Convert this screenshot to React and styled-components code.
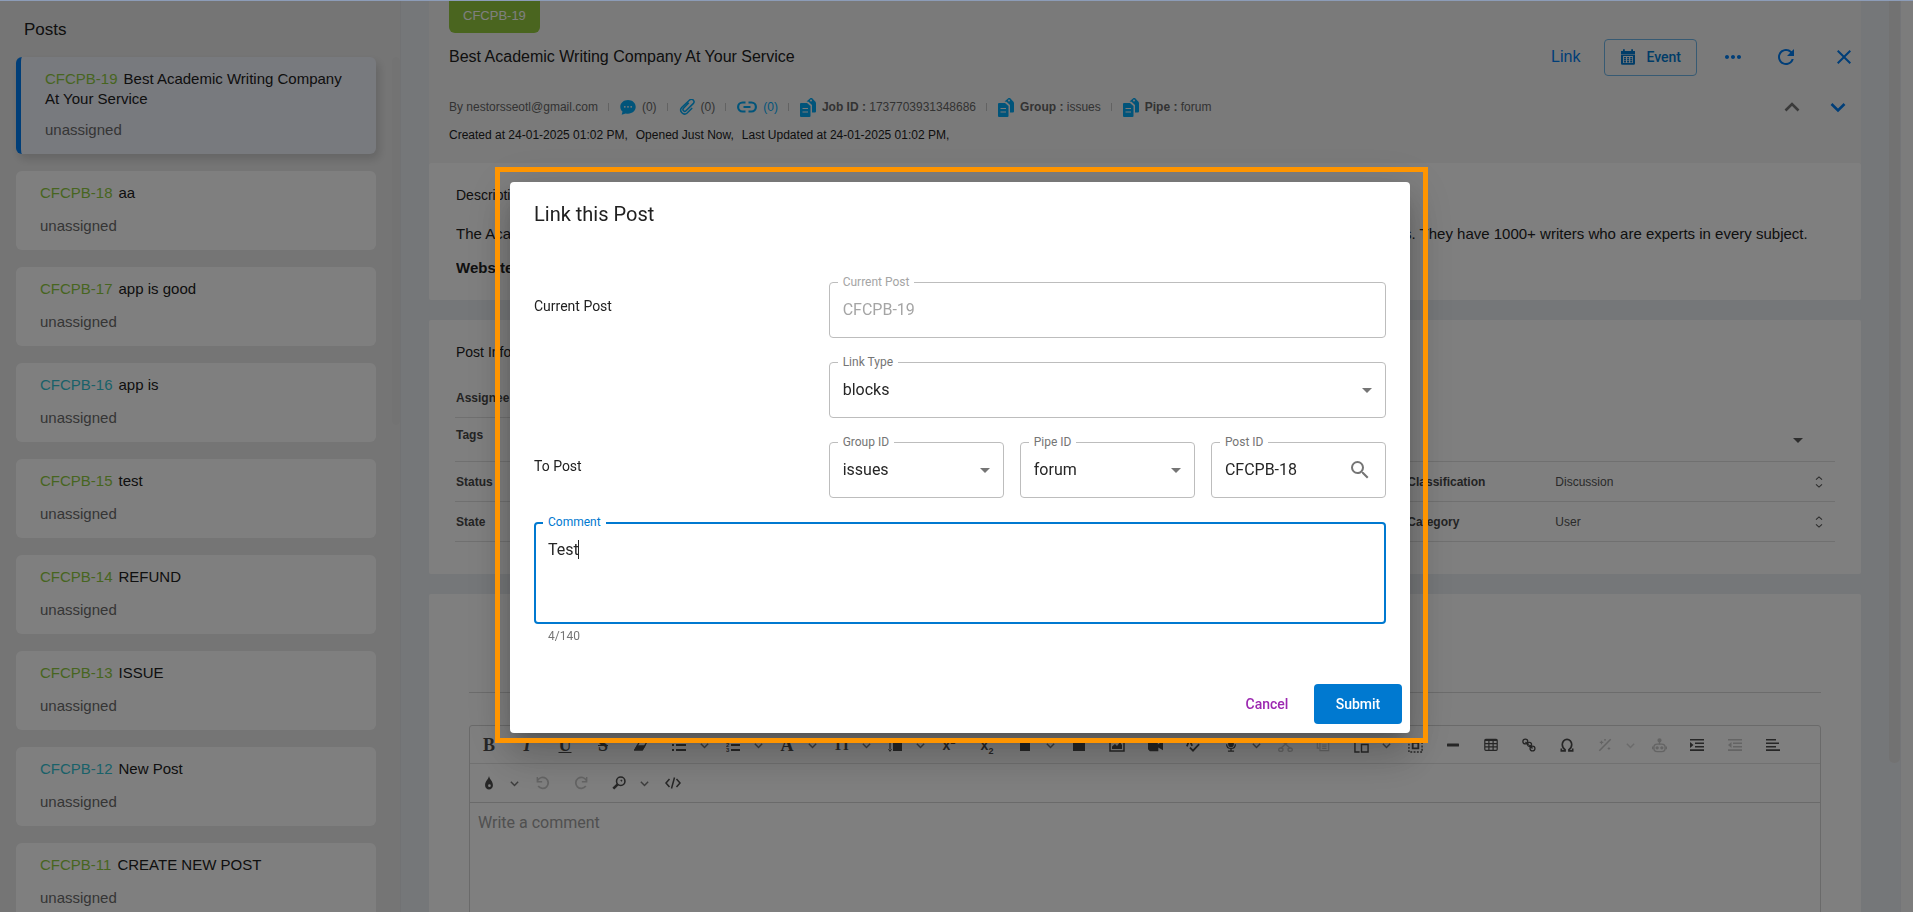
import React, { useState } from 'react'
import styled, { createGlobalStyle, css } from 'styled-components'
import {
  MdArrowDropDown,
  MdSearch,
  MdMoreHoriz,
  MdRefresh,
  MdClose,
} from 'react-icons/md'

const sans = `'Liberation Sans', Arial, sans-serif`
const ui = `Roboto, 'Liberation Sans', sans-serif`
const blue = '#007cf0'
const primary = '#0079d0'

const GlobalStyle = createGlobalStyle`
  * {
    box-sizing: border-box;
  }

  body {
    margin: 0;
    overflow: hidden;
    font-family: ${sans};
    color: #212121;
  }

  button, input, select, textarea {
    margin: 0;
    padding: 0;
    border: 0;
    outline: 0;
    background: none;
    font: inherit;
    color: inherit;
  }

  p, h1, h2, h3, ul {
    margin: 0;
    padding: 0;
    font-weight: 400;
  }
`

const Page = styled.div`
  display: flex;
  height: 100vh;
  overflow: hidden;
  background-color: #ebeef2;
`

/* ---------- sidebar ---------- */

const Sidebar = styled.aside`
  display: flex;
  flex-direction: column;
  flex: 0 0 401px;
  border-right: 1px solid #e2e5e9;
  background-color: #ebebeb;
`
const SidebarTitle = styled.h2`
  padding: 20px 24px 17px;
  font-size: 17px;
  line-height: 20px;
`
const SidebarBody = styled.div`
  display: flex;
  gap: 16px;
`
const PostList = styled.ul`
  display: flex;
  flex: 1;
  flex-direction: column;
  gap: 17px;
  padding-left: 16px;
  list-style: none;
`
const SidebarThumb = styled.div`
  width: 8px;
  height: 368px;
  border-radius: 4px;
  background-color: #e7e7e7;
`
const PostCard = styled.li`
  padding: 12px 24px 14px;
  border-radius: 6px;
  background-color: #fff;
  font-size: 15px;
  line-height: 20px;

  ${(props) =>
    props.$active &&
    css`
      border-left: 5px solid ${blue};
      background-color: #f1f4fd;
      box-shadow: 3px 5px 10px rgba(0, 0, 0, 0.15);
    `}
`
const PostTitle = styled.h3`
  min-height: 22px;
  margin-bottom: 11px;
  font-size: 15px;
`
const PostCode = styled.span`
  margin-right: 6px;
  color: ${(props) => props.$color};
`
const PostOwner = styled.p`
  color: #6b6b6b;
`

/* ---------- main column ---------- */

const Main = styled.main`
  display: flex;
  flex: 1;
  gap: 28px;
  min-width: 0;
  padding-left: 28px;
`
const Content = styled.div`
  flex: 1;
  min-width: 0;
`
const MainThumb = styled.div`
  width: 11px;
  height: 763px;
  border-radius: 0 0 5px 5px;
  background-color: #e5e5e5;
`
const RightRail = styled.div`
  width: 13px;
  border-left: 1px solid #e9eaf0;
  background-color: #f8f8f8;
`

const Header = styled.header`
  display: flex;
  flex-direction: column;
  align-items: stretch;
  height: 163px;
  padding: 0 5px 0 20px;
  background-color: #f5f5f5;
`
const Badge = styled.span`
  align-self: flex-start;
  padding: 6px 14px 7px;
  border-radius: 0 0 6px 6px;
  background-color: #94ca3e;
  color: #fff;
  font-size: 13px;
  line-height: 20px;
`
const HeaderRow = styled.div`
  display: flex;
  align-items: center;
  justify-content: space-between;
  height: 38px;
  margin-top: 5px;
`
const HeaderTitle = styled.h1`
  font-size: 16px;
  line-height: 20px;
`
const Actions = styled.div`
  display: flex;
  align-items: center;
  color: ${blue};
`
const LinkAction = styled.a`
  margin-right: 24px;
  color: inherit;
  font-size: 16px;
  text-decoration: none;
`
const EventButton = styled.button`
  display: flex;
  align-items: center;
  gap: 10px;
  height: 37px;
  padding: 0 15px;
  border: 1px solid #6eb4e6;
  border-radius: 4px;
  color: ${primary};
  font-family: ${ui};
  font-size: 14px;
  font-weight: 500;
`
const IconButton = styled.button`
  display: flex;
  align-items: center;
  justify-content: center;
  width: 24px;
  height: 24px;
  margin-left: ${(props) => props.$gap || 0}px;
  color: ${(props) => props.$color || 'inherit'};
`
const MetaRow = styled.div`
  display: flex;
  align-items: center;
  height: 24px;
  margin-top: 19px;
  color: #666;
  font-size: 12px;
`
const MetaItem = styled.span`
  display: flex;
  align-items: center;
  gap: 6px;
  color: ${(props) => (props.$link ? '#03a9f4' : 'inherit')};

  &:not(:first-child)::before {
    content: '';
    width: 1px;
    height: 8px;
    margin: 0 5px 0 10px;
    background-color: #c4c4c4;
  }

  svg {
    color: #03a9f4;
  }
`
const Stepper = styled.div`
  display: flex;
  gap: 22px;
  margin: 0 6px 0 auto;
`
const Dates = styled.p`
  display: flex;
  gap: 8px;
  margin-top: 8px;
  font-size: 12px;
  line-height: 16px;
`

const Card = styled.section`
  margin-bottom: 20px;
  padding: ${(props) => props.$padding};
  border-radius: 2px;
  background-color: #fff;
`
const CardTitle = styled.h2`
  font-size: 14px;
  line-height: 20px;
`
const Description = styled.p`
  margin-top: ${(props) => props.$gap}px;
  overflow: hidden;
  font-size: 15px;
  line-height: 20px;
  white-space: nowrap;
`
const InfoRow = styled.div`
  display: grid;
  grid-template-columns: repeat(3, 1fr);
  column-gap: 48px;
  align-items: center;
  height: 40px;
  margin-left: -1px;
  padding-left: 1px;
  border-bottom: 1px solid #e0e0e0;
  color: #555;
  font-size: 12px;
`
const AssigneeRow = styled(InfoRow)`
  align-items: end;
  width: 50%;
  height: 56px;
  padding-bottom: 12px;
`
const TagsRow = styled(InfoRow)`
  align-items: start;
  height: 44px;
  padding-top: 10px;
`
const InfoCell = styled.div`
  display: grid;
  grid-template-columns: 148px 1fr 22px;
  align-items: center;
  grid-column: 3;
`
const InfoLabel = styled.label`
  color: #484848;
  font-weight: 700;
`
const InfoSelect = styled.select`
  appearance: none;
`
const TagArrow = styled(MdArrowDropDown)`
  grid-column: 3;
  justify-self: end;
  margin-right: 25px;
  color: #5a5a5a;
`

/* ---------- comment editor ---------- */

const TabLine = styled.div`
  height: 99px;
  margin-bottom: 32px;
  border-bottom: 1px solid #d8d8d8;
`
const Editor = styled.div`
  height: 400px;
  border: 1px solid #d4d4d4;
  border-radius: 3px;
`
const Toolbar = styled.div`
  display: flex;
  gap: 4px;
  height: ${(props) => props.$height}px;
  padding: 2px;
  border-bottom: 1px solid ${(props) => props.$line};
`
const Tool = styled.span`
  display: flex;
  opacity: ${(props) => (props.$off ? 0.3 : 1)};
`
const ToolButton = styled.button`
  display: flex;
  align-items: center;
  justify-content: center;
  width: 34px;
  height: 34px;
  color: #4c4c4c;
`
const ToolChevron = styled(ToolButton)`
  width: 16px;
  color: #7a7a7a;
`
const Glyph = styled.span`
  font-family: 'Liberation Serif', serif;
  font-size: ${(props) => props.$size || 18}px;
  font-weight: 700;
  font-style: ${(props) => (props.$italic ? 'italic' : 'normal')};
  line-height: 20px;
  text-decoration: ${(props) => props.$line || 'none'};
`
const Script = styled.span`
  font-size: 14px;
  font-weight: 700;
  line-height: 20px;

  sup,
  sub {
    font-size: 9px;
    line-height: 0;
  }
`
const EditorInput = styled.textarea`
  display: block;
  width: 100%;
  height: 300px;
  padding: 8px;
  font-family: ${ui};
  font-size: 16px;
  line-height: 24px;
  resize: none;

  &::placeholder {
    color: #a0a0a0;
    opacity: 1;
  }
`

/* ---------- dialog ---------- */

const TopLine = styled.div`
  position: fixed;
  inset: 0 0 auto;
  height: 1px;
  background-color: #8c9cb8;
`
const Overlay = styled.div`
  position: fixed;
  inset: 0;
  display: flex;
  align-items: center;
  justify-content: center;
  padding: 0 0 2px 10px;
  background-color: rgba(0, 0, 0, 0.5);
`
const Frame = styled.div`
  position: relative;
  padding: 15px 18px 10px 15px;

  &::after {
    content: '';
    position: absolute;
    inset: 0;
    border: 5px solid #ff9500;
    pointer-events: none;
  }
`
const Dialog = styled.form`
  width: 900px;
  max-width: 90vw;
  border-radius: 4px;
  background-color: #fff;
  box-shadow:
    0 11px 15px -7px rgba(0, 0, 0, 0.2),
    0 24px 38px 3px rgba(0, 0, 0, 0.14),
    0 9px 46px 8px rgba(0, 0, 0, 0.12);
  font-family: ${ui};
`
const DialogTitle = styled.h2`
  padding: 16px 24px;
  font-size: 20px;
  line-height: 32px;
`
const DialogBody = styled.div`
  display: grid;
  grid-template-columns: 1fr 2fr;
  gap: 24px 16px;
  padding: 36px 24px 40px;
`
const RowLabel = styled.p`
  grid-column: 1;
  padding-top: 14px;
  font-size: 14px;
  line-height: 20px;
`
const FieldGroup = styled.div`
  display: grid;
  grid-column: 2;
  grid-template-columns: repeat(${(props) => props.$count || 1}, minmax(0, 1fr));
  gap: 16px;
`
const Field = styled.div`
  position: relative;
  display: flex;
  align-items: center;
  height: 56px;
  padding: 0 6px 0 13px;
  border: 1px solid #bdbdbd;
  border-radius: 4px;
  color: #757575;
`
const FieldLabel = styled.label`
  position: absolute;
  top: -9px;
  left: 8px;
  padding: 0 5px;
  background-color: #fff;
  color: ${(props) => props.$color || '#757575'};
  font-size: 12px;
  line-height: 16px;
`
const fieldText = css`
  flex: 1;
  min-width: 0;
  height: 54px;
  padding-bottom: 2px;
  color: #262626;
  font-size: 16px;
`
const FieldInput = styled.input`
  ${fieldText}

  &:disabled {
    color: #a5a5a5;
  }
`
const FieldSelect = styled.select`
  ${fieldText}
  appearance: none;
`
const SearchButton = styled.button`
  display: flex;
  margin-right: 7px;
  color: #757575;
`
const CommentRow = styled.div`
  grid-column: 1 / -1;
`
const CommentField = styled(Field)`
  height: 102px;
  padding: 14px 12px;
  border: 2px solid ${primary};

  ${FieldLabel} {
    top: -10px;
    left: 7px;
  }
`
const CommentInput = styled.textarea`
  width: 100%;
  height: 71px;
  color: #262626;
  font-size: 16px;
  line-height: 23px;
  caret-color: transparent;
  resize: none;
`
const Caret = styled.span`
  position: absolute;
  top: 16px;
  left: 42px;
  width: 1px;
  height: 19px;
  background-color: #262626;
`
const Counter = styled.p`
  margin: 4px 14px 0;
  color: #757575;
  font-size: 12px;
  line-height: 16px;
`
const DialogActions = styled.div`
  display: flex;
  justify-content: flex-end;
  gap: 8px;
  padding: 0 8px 9px;
`
const DialogButton = styled.button`
  min-width: ${(props) => (props.$primary ? 88 : 78)}px;
  height: 40px;
  padding: 0 16px;
  border-radius: 4px;
  background-color: ${(props) => (props.$primary ? primary : 'transparent')};
  color: ${(props) => (props.$primary ? '#fff' : '#9c27b0')};
  font-size: 14px;
  font-weight: 500;
`

/* ---------- icons ---------- */

const Svg = ({ size = 16, box = 16, children, ...rest }) => (
  <svg
    width={size}
    height={size}
    viewBox={`0 0 ${box} ${box}`}
    fill="none"
    stroke="currentColor"
    strokeWidth="1.5"
    aria-hidden="true"
    {...rest}
  >
    {children}
  </svg>
)

const Solid = (props) => <Svg fill="currentColor" stroke="none" {...props} />

const ChevronIcon = ({ up, size = 16, width = 2.6 }) => (
  <Svg size={size} strokeWidth={width}>
    <path d={up ? 'M1.500 11.500 8 5l6.500 6.500' : 'M1.500 5 8 11.500 14.500 5'} />
  </Svg>
)

const SortIcon = () => (
  <Svg size={12} box={12} strokeWidth="1.1">
    <path d="M3 3.7 6 .9l3 2.8M3 8.3l3 2.8 3-2.8" />
  </Svg>
)

const ChatIcon = () => (
  <Solid size={16}>
    <path d="M8 1C3.7 1 .3 3.9 .3 7.7c0 2 .9 3.7 2.2 4.900L1.700 15.800l4-1.400c.8.2 1.500.3 2.300.3 4.300 0 7.700-3 7.700-6.900S12.300 1 8 1z" />
    <g fill="#f5f5f5">
      <circle cx="4.8" cy="7.8" r="0.9" />
      <circle cx="8" cy="7.8" r="0.9" />
      <circle cx="11.2" cy="7.8" r="0.9" />
    </g>
  </Solid>
)

const ClipIcon = () => (
  <Svg size={16} strokeWidth="1.5">
    <path d="M9.800 3.800 4.500 9.300a1.700 1.700 0 0 0 2.500 2.400l7.200-7.100a2.500 2.500 0 0 0-3.600-3.600L2.700 8.500a3.900 3.900 0 0 0 5.500 5.500l5-5" />
  </Svg>
)

const ChainIcon = () => (
  <svg width="20" height="12" viewBox="0 0 20 12" fill="none" stroke="currentColor" strokeWidth="2.2">
    <path d="M8.500 1.500H5.600a4.500 4.500 0 0 0 0 9H8.500M11.500 1.500h2.900a4.500 4.500 0 0 1 0 9h-2.900M6.500 6h7" />
  </svg>
)

const CopyIcon = () => (
  <svg width="16" height="19" viewBox="0 0 16 19" fill="currentColor">
    <path d="M1 5h6l3.500 3v10a1 1 0 0 1-1 1H1a1 1 0 0 1-1-1V6a1 1 0 0 1 1-1z" />
    <path d="M6.500 3.500 10.500 0h1.500l2.500 2.800A3 3 0 0 1 16 5v8.500a1 1 0 0 1-1 1h-3V7L8.500 3.800z" />
    <path d="M2.500 10.500h5.500M2.500 14h5.500" stroke="#f5f5f5" strokeWidth="1.200" />
    <circle cx="11" cy="2.500" r="1" fill="#f5f5f5" />
  </svg>
)

const CalendarIcon = () => (
  <Solid size={16}>
    <path d="M1 2h2V.3h1.800V2h6.400V.3H13V2h2v3H1zM1 5.500h14v9a1.300 1.300 0 0 1-1.300 1.300H2.300A1.300 1.300 0 0 1 1 14.500z" />
    <path d="M3.100 7h9.800v7H3.100z" fill="#f5f5f5" />
    <path d="M4 8.800h8.200M4 10.800h8.200M4 12.800h8.200" stroke={primary} strokeWidth="1.400" strokeDasharray="2 1.100" />
  </Solid>
)

const EraserIcon = () => (
  <Svg size={14}>
    <path d="M1 13.500 6.500 4H15l-5.500 9.500z" />
    <path d="M1 13.500 3.800 9h8.500l-2.800 4.500z" fill="currentColor" />
  </Svg>
)

const ListIcon = () => (
  <Solid size={14} box={14}>
    <path d="M0 1h2v2H0zM0 6h2v2H0zM0 11h2v2H0zM4 1h10v2H4zM4 6h10v2H4zM4 11h10v2H4z" />
  </Solid>
)

const NumberListIcon = () => (
  <Solid size={14} box={14}>
    <path d="M5 1h9v2H5zM5 6h9v2H5zM5 11h9v2H5z" />
    <g fontFamily="Liberation Sans" fontSize="6" fontWeight="700">
      <text x="0" y="4">1</text>
      <text x="0" y="9">2</text>
      <text x="0" y="14">3</text>
    </g>
  </Solid>
)

const LineHeightIcon = () => (
  <Solid size={14} box={14}>
    <path d="M2 0l2 3H0zM2 14l2-3H0zM1.400 2h1.200v10H1.400zM5 1h9v12H5z" />
  </Solid>
)

const FileIcon = () => (
  <Solid size={14} box={14}>
    <path d="M2 1h5l1 2h4v10H2z" />
  </Solid>
)

const SquareIcon = () => (
  <Solid size={14} box={14}>
    <path d="M1 1h12v12H1z" />
  </Solid>
)

const ImageIcon = () => (
  <Svg size={16}>
    <path d="M1 2h14v12H1z" />
    <path d="M3 12V9.500l3-2.500 2 2 3-4 2 3v4z" fill="currentColor" stroke="none" />
  </Svg>
)

const VideoIcon = () => (
  <Solid size={15}>
    <path d="M0 3h10.500v4L16 3v10l-5-3v4H2l-2-2z" />
  </Solid>
)

const SpellIcon = () => (
  <Svg size={14} strokeWidth="2">
    <path d="M1 9.500 4 2l3 7M4.500 11l3.500 3.500L15 7" />
  </Svg>
)

const MicIcon = () => (
  <Svg size={14}>
    <rect x="5.500" y="0.500" width="5" height="9" rx="2.500" fill="currentColor" />
    <path d="M3 7c0 6.500 10 6.500 10 0M8 12v3M4.500 15h7" />
  </Svg>
)

const CutIcon = () => (
  <Svg size={15}>
    <path d="M3 2l10 9M13 2 3 11" />
    <ellipse cx="3" cy="12.500" rx="2.300" ry="1.800" />
    <ellipse cx="13" cy="12.500" rx="2.300" ry="1.800" />
  </Svg>
)

const DuplicateIcon = () => (
  <Svg size={14} strokeWidth="1.300">
    <path d="M3.500 11.500h-2v-10h8v2M4.500 4.500h10v10h-10zM7 8h5M7 10h5M7 12h5" />
  </Svg>
)

const PasteIcon = () => (
  <Svg size={15}>
    <path d="M6 15H1V2h11v3M8 7h7v8H8z" />
    <path d="M4 0h5v4H4z" fill="currentColor" stroke="none" />
  </Svg>
)

const SelectAllIcon = () => (
  <Svg size={15}>
    <path d="M1 1h14v14H1z" strokeDasharray="2 1.500" />
    <path d="M5 5h6v6H5z" strokeWidth="2" />
  </Svg>
)

const RuleIcon = () => (
  <Solid size={12} box={12}>
    <rect y="4.500" width="12" height="3" rx="0.500" />
  </Solid>
)

const TableIcon = () => (
  <Svg size={14} box={14} strokeWidth="1.200">
    <rect x="0.800" y="1.300" width="12.400" height="11" rx="1" />
    <path d="M1 2h12" strokeWidth="2" />
    <path d="M1 5.700h12M1 8.900h12M4.900 2v10M9.100 2v10" />
  </Svg>
)

const LinksIcon = () => (
  <Svg size={14}>
    <circle cx="3.800" cy="4" r="2.800" />
    <circle cx="12" cy="12" r="2.800" />
    <path d="M4 4.500 7.500 8M8.500 8 12 12M6.500 6.500a2.300 2.300 0 1 1 3 3 2.300 2.300 0 0 1-3-3" />
  </Svg>
)

const OmegaIcon = () => (
  <Svg size={14} strokeWidth="1.900">
    <path d="M1.500 12v2.800h4.300v-1.500C3.800 12 2.600 10 2.600 7.500a5.400 6 0 0 1 10.800 0c0 2.500-1.200 4.500-3.200 5.800v1.500h4.300V12" />
  </Svg>
)

const WandIcon = () => (
  <Svg size={14} strokeWidth="1.800">
    <path d="M1.500 14.500 14.500 1.500" />
    <path d="M2 5h4M4 3v4M7 2h2M8 1v2M11 12h3M12.500 10.500v3" strokeWidth="1.300" />
  </Svg>
)

const RobotIcon = () => (
  <Svg size={15}>
    <rect x="2" y="6.500" width="12" height="8" rx="3.500" />
    <path d="M8 3v4M.5 9v3M15.500 9v3" />
    <circle cx="8" cy="2.500" r="1.500" fill="currentColor" />
    <circle cx="5.500" cy="10.500" r="1" fill="currentColor" />
    <circle cx="10.500" cy="10.500" r="1" fill="currentColor" />
  </Svg>
)

const IndentIcon = ({ out }) => (
  <Solid size={14} box={14}>
    <path d="M0 1h14v1.600H0zM5 4.400h9V6H5zM5 7.900h9v1.600H5zM0 11.300h14v1.600H0z" />
    <path d={out ? 'M3.500 4v6L0 7z' : 'M0 4v6l3.500-3z'} />
  </Solid>
)

const AlignIcon = () => (
  <Solid size={14} box={14}>
    <path d="M0 1h10v1.600H0zM0 4.400h13V6H0zM0 7.900h10v1.600H0zM0 11.300h14v1.600H0z" />
  </Solid>
)

const DropIcon = () => (
  <Solid size={14}>
    <path d="M8 0c.5 3.500 4.500 6 4.500 10.500a4.500 5 0 0 1-9 0C3.500 6 7.500 3.500 8 0z" />
    <circle cx="8.500" cy="11" r="1.500" fill="#fff" />
  </Solid>
)

const TurnIcon = ({ redo }) => (
  <Svg size={14} strokeWidth="2">
    <path d={redo ? 'M14 5A6.300 6.300 0 1 0 13.500 11.500' : 'M2 5A6.300 6.300 0 1 1 2.500 11.500'} />
    <path d={redo ? 'M14.500 1v5.500H9' : 'M1.500 1v5.500H7'} strokeWidth="1.600" />
  </Svg>
)

const FindIcon = () => (
  <Svg size={14}>
    <circle cx="10" cy="6" r="4.800" strokeWidth="1.800" />
    <path d="M6.500 9.500 1.500 14.500" strokeWidth="3" />
    <path d="M10 4.500 11.500 6" />
  </Svg>
)

const CodeIcon = () => (
  <Svg size={16}>
    <path d="M4.500 4 1 8l3.500 4M11.500 4 15 8l-3.500 4M9.500 2.500l-3 11" />
  </Svg>
)

/* ---------- data ---------- */

const GREEN = '#8fcb41'
const CYAN = '#35c3d3'

const posts = [
  { id: 19, title: 'Best Academic Writing Company At Your Service', color: GREEN },
  { id: 18, title: 'aa', color: GREEN },
  { id: 17, title: 'app is good', color: GREEN },
  { id: 16, title: 'app is', color: CYAN },
  { id: 15, title: 'test', color: GREEN },
  { id: 14, title: 'REFUND', color: GREEN },
  { id: 13, title: 'ISSUE', color: GREEN },
  { id: 12, title: 'New Post', color: CYAN },
  { id: 11, title: 'CREATE NEW POST', color: GREEN },
]

const tools = [
  { name: 'Bold', icon: <Glyph>B</Glyph> },
  { name: 'Italic', icon: <Glyph $italic>I</Glyph> },
  { name: 'Underline', icon: <Glyph $line="underline">U</Glyph> },
  { name: 'Strike through', icon: <Glyph $line="line-through">S</Glyph> },
  { name: 'Eraser', icon: <EraserIcon /> },
  { name: 'Bullet list', icon: <ListIcon />, menu: true },
  { name: 'Numbered list', icon: <NumberListIcon />, menu: true },
  { name: 'Font', icon: <Glyph>A</Glyph>, menu: true },
  { name: 'Font size', icon: <Glyph $size={15}>TI</Glyph>, menu: true },
  { name: 'Line height', icon: <LineHeightIcon />, menu: true },
  { name: 'Superscript', icon: <Script>x<sup>2</sup></Script> },
  { name: 'Subscript', icon: <Script>x<sub>2</sub></Script> },
  { name: 'Class name', icon: <FileIcon />, menu: true },
  { name: 'File', icon: <SquareIcon /> },
  { name: 'Image', icon: <ImageIcon /> },
  { name: 'Video', icon: <VideoIcon /> },
  { name: 'Spellcheck', icon: <SpellIcon /> },
  { name: 'Speech', icon: <MicIcon />, menu: true },
  { name: 'Cut', icon: <CutIcon />, off: true },
  { name: 'Copy', icon: <DuplicateIcon />, off: true },
  { name: 'Paste', icon: <PasteIcon />, menu: true },
  { name: 'Select all', icon: <SelectAllIcon /> },
  { name: 'Horizontal line', icon: <RuleIcon /> },
  { name: 'Table', icon: <TableIcon /> },
  { name: 'Insert link', icon: <LinksIcon /> },
  { name: 'Symbols', icon: <OmegaIcon /> },
  { name: 'AI commands', icon: <WandIcon />, menu: true, off: true },
  { name: 'AI assistant', icon: <RobotIcon />, off: true },
  { name: 'Indent', icon: <IndentIcon /> },
  { name: 'Outdent', icon: <IndentIcon out />, off: true },
  { name: 'Align', icon: <AlignIcon /> },
]

const moreTools = [
  { name: 'Text color', icon: <DropIcon />, menu: true },
  { name: 'Undo', icon: <TurnIcon />, off: true },
  { name: 'Redo', icon: <TurnIcon redo />, off: true },
  { name: 'Find', icon: <FindIcon />, menu: true },
  { name: 'Source', icon: <CodeIcon /> },
]

/* ---------- components ---------- */

function PostsPanel() {
  return (
    <Sidebar>
      <SidebarTitle>Posts</SidebarTitle>
      <SidebarBody>
        <PostList>
          {posts.map((post, index) => (
            <PostCard key={post.id} $active={index === 0}>
              <PostTitle>
                <PostCode $color={post.color}>CFCPB-{post.id}</PostCode>
                {post.title}
              </PostTitle>
              <PostOwner>unassigned</PostOwner>
            </PostCard>
          ))}
        </PostList>
        <SidebarThumb />
      </SidebarBody>
    </Sidebar>
  )
}

function PostHeader() {
  return (
    <Header>
      <Badge>CFCPB-19</Badge>
      <HeaderRow>
        <HeaderTitle>Best Academic Writing Company At Your Service</HeaderTitle>
        <Actions>
          <LinkAction href="#link">Link</LinkAction>
          <EventButton type="button">
            <CalendarIcon />
            Event
          </EventButton>
          <IconButton type="button" aria-label="More" $gap={24}>
            <MdMoreHoriz size={24} />
          </IconButton>
          <IconButton type="button" aria-label="Refresh" $gap={29}>
            <MdRefresh size={24} />
          </IconButton>
          <IconButton type="button" aria-label="Close" $gap={34}>
            <MdClose size={24} />
          </IconButton>
        </Actions>
      </HeaderRow>
      <MetaRow>
        <MetaItem>By nestorsseotl@gmail.com</MetaItem>
        <MetaItem>
          <ChatIcon />
          (0)
        </MetaItem>
        <MetaItem>
          <ClipIcon />
          (0)
        </MetaItem>
        <MetaItem $link>
          <ChainIcon />
          (0)
        </MetaItem>
        <MetaItem>
          <CopyIcon />
          <span>
            <b>Job ID :</b> 1737703931348686
          </span>
        </MetaItem>
        <MetaItem>
          <CopyIcon />
          <span>
            <b>Group :</b> issues
          </span>
        </MetaItem>
        <MetaItem>
          <CopyIcon />
          <span>
            <b>Pipe :</b> forum
          </span>
        </MetaItem>
        <Stepper>
          <IconButton type="button" aria-label="Previous post" $color="#757575">
            <ChevronIcon up />
          </IconButton>
          <IconButton type="button" aria-label="Next post" $color={blue}>
            <ChevronIcon />
          </IconButton>
        </Stepper>
      </MetaRow>
      <Dates>
        <span>Created at 24-01-2025 01:02 PM,</span>
        <span>Opened Just Now,</span>
        <span>Last Updated at 24-01-2025 01:02 PM,</span>
      </Dates>
    </Header>
  )
}

function PostInfo() {
  return (
    <Card $padding="22px 26px 32px 27px">
      <CardTitle>Post Information</CardTitle>
      <AssigneeRow>
        <InfoLabel as="span">Assignee</InfoLabel>
      </AssigneeRow>
      <TagsRow>
        <InfoLabel as="span">Tags</InfoLabel>
        <InfoCell>
          <TagArrow size={24} />
        </InfoCell>
      </TagsRow>
      <InfoRow>
        <InfoLabel as="span">Status</InfoLabel>
        <InfoCell>
          <InfoLabel htmlFor="classification">Classification</InfoLabel>
          <InfoSelect id="classification">
            <option>Discussion</option>
          </InfoSelect>
          <SortIcon />
        </InfoCell>
      </InfoRow>
      <InfoRow>
        <InfoLabel as="span">State</InfoLabel>
        <InfoCell>
          <InfoLabel htmlFor="category">Category</InfoLabel>
          <InfoSelect id="category">
            <option>User</option>
          </InfoSelect>
          <SortIcon />
        </InfoCell>
      </InfoRow>
    </Card>
  )
}

function ToolRow({ items, height, line }) {
  return (
    <Toolbar $height={height} $line={line}>
      {items.map((item) => (
        <Tool key={item.name} $off={item.off}>
          <ToolButton type="button" aria-label={item.name}>
            {item.icon}
          </ToolButton>
          {item.menu && (
            <ToolChevron type="button" aria-label={`${item.name} options`}>
              <ChevronIcon size={9} />
            </ToolChevron>
          )}
        </Tool>
      ))}
    </Toolbar>
  )
}

function CommentEditor() {
  return (
    <Card $padding="0 40px">
      <TabLine />
      <Editor>
        <ToolRow items={tools} height={38} line="#e2e2e2" />
        <ToolRow items={moreTools} height={39} line="#d4d4d4" />
        <EditorInput placeholder="Write a comment" aria-label="Write a comment" />
      </Editor>
    </Card>
  )
}

function SelectField({ id, label, value }) {
  return (
    <Field>
      <FieldLabel htmlFor={id}>{label}</FieldLabel>
      <FieldSelect id={id}>
        <option>{value}</option>
      </FieldSelect>
      <MdArrowDropDown size={24} />
    </Field>
  )
}

function LinkDialog() {
  const [comment, setComment] = useState('Test')

  return (
    <Overlay>
      <Frame>
        <Dialog role="dialog" aria-label="Link this Post">
          <DialogTitle>Link this Post</DialogTitle>
          <DialogBody>
            <RowLabel>Current Post</RowLabel>
            <FieldGroup>
              <Field>
                <FieldLabel htmlFor="current" $color="#a5a5a5">
                  Current Post
                </FieldLabel>
                <FieldInput id="current" value="CFCPB-19" disabled readOnly />
              </Field>
            </FieldGroup>
            <FieldGroup>
              <SelectField id="linkType" label="Link Type" value="blocks" />
            </FieldGroup>
            <RowLabel>To Post</RowLabel>
            <FieldGroup $count={3}>
              <SelectField id="groupId" label="Group ID" value="issues" />
              <SelectField id="pipeId" label="Pipe ID" value="forum" />
              <Field>
                <FieldLabel htmlFor="postId">Post ID</FieldLabel>
                <FieldInput id="postId" defaultValue="CFCPB-18" />
                <SearchButton type="button" aria-label="Search post">
                  <MdSearch size={24} />
                </SearchButton>
              </Field>
            </FieldGroup>
            <CommentRow>
              <CommentField>
                <FieldLabel htmlFor="comment" $color={primary}>
                  Comment
                </FieldLabel>
                <CommentInput
                  id="comment"
                  value={comment}
                  maxLength={140}
                  onChange={(e) => setComment(e.target.value)}
                />
                <Caret />
              </CommentField>
              <Counter>{comment.length}/140</Counter>
            </CommentRow>
          </DialogBody>
          <DialogActions>
            <DialogButton type="button">Cancel</DialogButton>
            <DialogButton type="button" $primary>
              Submit
            </DialogButton>
          </DialogActions>
        </Dialog>
      </Frame>
    </Overlay>
  )
}

function App() {
  return (
    <>
      <GlobalStyle />
      <Page>
        <PostsPanel />
        <Main>
          <Content>
            <PostHeader />
            <Card $padding="22px 27px">
              <CardTitle>Description</CardTitle>
              <Description $gap={19}>
                The Academic Papers UK is a trusted academic writing company that gives essays, dissertations, research papers and other
                help to all students. They have 1000+ writers who are experts in every subject.
              </Description>
              <Description $gap={14}>
                <b>Website</b>
              </Description>
            </Card>
            <PostInfo />
            <CommentEditor />
          </Content>
          <MainThumb />
        </Main>
        <RightRail />
      </Page>
      <LinkDialog />
      <TopLine />
    </>
  )
}

export default App
